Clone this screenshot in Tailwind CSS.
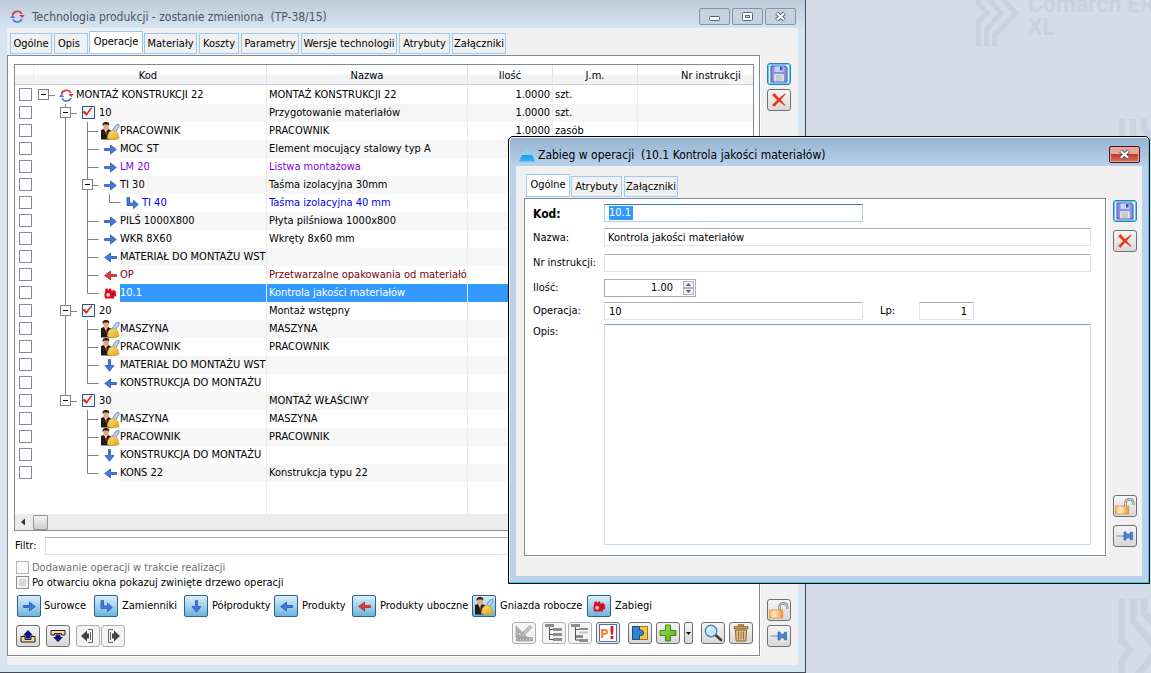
<!DOCTYPE html>
<html lang="pl">
<head>
<meta charset="utf-8">
<title>Technologia produkcji</title>
<script src="https://cdn.jsdelivr.net/npm/@tailwindcss/browser@4"></script>
</head>
<body class="relative h-screen overflow-hidden bg-[#d5dbe7] font-['DejaVu_Sans_Condensed','Noto_Sans',sans-serif] text-[11px] leading-[14px] text-black">

<svg class="absolute h-0 w-0" aria-hidden="true">
  <defs>
    <linearGradient id="gold" x1="0" y1="0" x2="1" y2="1"><stop offset="0" stop-color="#fbe27c"/><stop offset="1" stop-color="#e0a21c"/></linearGradient>
    <linearGradient id="orange" x1="0" y1="0" x2="1" y2="0"><stop offset="0" stop-color="#ffc070"/><stop offset=".4" stop-color="#ffe9c4"/><stop offset="1" stop-color="#f09030"/></linearGradient>
    <linearGradient id="green" x1="0" y1="0" x2="1" y2="1"><stop offset="0" stop-color="#a6e254"/><stop offset="1" stop-color="#4fae12"/></linearGradient>
    <linearGradient id="tri" x1="0" y1="0" x2="0" y2="1"><stop offset="0" stop-color="#a8c4dc"/><stop offset=".5" stop-color="#8fd0f4"/><stop offset=".55" stop-color="#1f9be8"/><stop offset="1" stop-color="#38b4f4"/></linearGradient>
    <symbol id="right" viewBox="0 0 13 11"><path d="M.5 4.500H6.500V1L12.300 5.500L6.500 10V6.500H.5z" fill="#4379dc" stroke="#2b57b4" stroke-width=".8"/></symbol>
    <symbol id="left" viewBox="0 0 13 11"><path d="M12.500 4.500H6.500V1L.7 5.500L6.500 10V6.500H12.500z" fill="#4379dc" stroke="#2b57b4" stroke-width=".8"/></symbol>
    <symbol id="redleft" viewBox="0 0 13 11"><path d="M12.500 4.500H6.500V1L.7 5.500L6.500 10V6.500H12.500z" fill="#dd3c38" stroke="#b02c2c" stroke-width=".8"/></symbol>
    <symbol id="down" viewBox="0 0 11 13"><path d="M4.500 .5V6.500H1L5.500 12.300L10 6.500H6.500V.5z" fill="#4379dc" stroke="#2b57b4" stroke-width=".8"/></symbol>
    <symbol id="ell" viewBox="0 0 13 12"><path d="M1 .5H3.500V6H7.500V3.200L12.300 7.500L7.500 11.500V8.500H1z" fill="#4379dc" stroke="#2b57b4" stroke-width=".8"/></symbol>
    <symbol id="gear" viewBox="0 0 13 11"><path d="M1 4L1.500 .5H3.500L4.500 2L5.500 .5H7L7.500 2.500H9L10 1.500L11 3L12.500 4L11.500 5.500L12.500 7L11.500 8.500L10 8.500V10.500H1L.3 7z" fill="#dc1022"/><circle cx="4.200" cy="6.800" r="1.900" fill="#ffd0d0"/><circle cx="9" cy="6" r="1" fill="#8e0010"/></symbol>
    <symbol id="cycle" viewBox="0 0 15 13"><path d="M2.500 5A5 5 0 0 1 11.800 4" fill="none" stroke="#dc3434" stroke-width="1.700"/><path d="M9.200 5H14.600L12.400 8z" fill="#dc3434"/><path d="M12 9A5 5 0 0 1 3 9.300" fill="none" stroke="#4a78dc" stroke-width="1.700"/><path d="M0 8H5.400L2.600 4.800z" fill="#4a78dc"/></symbol>
    <symbol id="worker" viewBox="0 0 20 18"><path d="M1 8L4 7L5.500 10L8 7L12 9V17.500H1z" fill="#201c1c"/><path d="M4.800 7.500H7.300L6.200 12z" fill="#fff"/><path d="M5.600 8.500H6.600L6.900 12L6 14z" fill="#c22"/><ellipse cx="6" cy="4.500" rx="2.700" ry="3.500" fill="#e7a873"/><path d="M2.800 4C2 1 3.500 0 6 0C8.500 0 10 1 9 4L8.200 2.400L4 2.400z" fill="#3b1d10"/><path d="M11 10L16 3L19 2.200L19 5L14 12z" fill="#b8cff0" stroke="#6688bd" stroke-width=".8"/><path d="M7.500 14.500C8 10 10.500 8 13.500 8.500C17 9 18.500 11.500 18.500 14.500L19.500 16C16 18.500 10 18.500 7 16z" fill="url(#gold)" stroke="#c08a1a" stroke-width=".5"/></symbol>
    <symbol id="floppy" viewBox="0 0 18 18"><path d="M1 1H15.500L17 2.500V17H1z" fill="#8b8fe6" stroke="#4a4cae"/><path d="M4.500 1.500H13.500V7H4.500z" fill="#c4d4f6"/><path d="M10 2H12.500V5.500H10z" fill="#4450a8"/><path d="M4 9H14V16.500H4z" fill="#fafafa" stroke="#8c8ec8" stroke-width=".6"/><path d="M5.500 11H12.500M5.500 13H12.500M5.500 15H12.500" stroke="#999"/></symbol>
    <symbol id="cross" viewBox="0 0 16 16"><path d="M1.200 3.200L3.400 1L8 6.200L14 1.600L14.600 2.300L9.700 7.800L14.300 13L13.700 13.800L8 9.400L3.600 14.800L1 13L6.200 7.900z" fill="#ee3318"/></symbol>
    <symbol id="lock" viewBox="0 0 20 18"><path d="M10.500 9V5.500A4 4 0 0 1 18.300 5.500V8" fill="none" stroke="#8a8a8a" stroke-width="2.600"/><path d="M10.500 9V5.500A4 4 0 0 1 18.300 5.500V8" fill="none" stroke="#dedede" stroke-width="1"/><rect x=".7" y="9" width="13" height="8" fill="url(#orange)" stroke="#dc8c3c" stroke-width=".8"/></symbol>
    <symbol id="pin" viewBox="0 0 18 12"><path d="M.5 6H8" stroke="#999" stroke-width="1.300"/><path d="M8 2H10L10.500 4.200H13.500L14.500 2.200H16.500V9.800H14.500L13.500 7.800H10.500L10 10H8z" fill="#3f86d8" stroke="#1e5aa8" stroke-width=".6"/></symbol>
    <symbol id="tree" viewBox="0 0 18 18"><path d="M0 0H9V3H0zM8 4H17V7H8zM8 9H17V12H8zM8 14H17V17H8z" fill="#8d8d8d"/><path d="M4.500 3V16M4.500 5.500H8M4.500 10.500H8M4.500 15.500H8" fill="none" stroke="#555"/></symbol>
    <symbol id="treecut" viewBox="0 0 18 18"><path d="M0 0H9V3H0zM8 4H17V6H8zM4 11H12V14H4zM8 15H17V18H8z" fill="#8d8d8d"/><path d="M8 7.500H17V9.500H8z" fill="#c6c6c6"/><path d="M4.500 3V16M4.500 5.500H8M4.500 16H8" fill="none" stroke="#555"/></symbol>
  </defs>
</svg>

<!-- Desktop watermark -->
<div class="absolute top-[-7px] left-[1028px] w-[150px] font-['Roboto',sans-serif] text-[23px] leading-[23px] font-bold text-[#cbd1de]">Comarch ERP XL</div>
<svg class="absolute top-0 left-[976px] h-12 w-12" viewBox="0 0 48 48" fill="none" stroke="#cbd1de" stroke-width="5"><path d="M2.500 47V22L11 13L2.500 3V-4M10.500 47V30L25 13L12 -2M18.500 47V36L40 13L26 -2"/></svg>
<svg class="absolute top-[119px] left-[1118px] h-8 w-9" viewBox="0 0 36 32" fill="none" stroke="#cbd1de" stroke-width="6"><path d="M4 0V40M15 0V40M26 0V10L36 22"/></svg>
<svg class="absolute top-[599px] left-[1118px] h-[74px] w-9" viewBox="0 0 36 74" fill="none" stroke="#cbd1de" stroke-width="6.500"><path d="M3.500 0V41L12 51L3.500 62V80M15.500 0V22L36 47M36 56L16 80M26 0V14L38 27"/></svg>

<!-- Main window -->
<main class="flex h-full w-[70%] flex-col border-r border-b border-[#454b54] bg-[#d7e4f2] px-[7px] pb-[7px]">
  <header class="-mx-[7px] flex h-7 shrink-0 items-start bg-linear-to-b from-[#bdcad9] to-[#d6e3f1] pr-[9px] pl-[10px]">
    <svg class="mt-[10px] h-[13px] w-[15px]"><use href="#cycle"/></svg>
    <h1 class="mt-[9px] ml-[7px] grow text-[12px] leading-4 whitespace-pre text-[#4b5561]">Technologia produkcji - zostanie zmieniona  (TP-38/15)</h1>
    <div class="mt-2 flex gap-[2px]">
      <button aria-label="Minimalizuj" class="flex h-[17px] w-[31px] items-center justify-center rounded-[2px] border border-[#8593a8] bg-[#c6d2e0]"><svg class="h-[11px] w-[13px]" viewBox="0 0 13 11"><rect x="1.500" y="5.500" width="10" height="4" rx="1" fill="#fff" stroke="#5a6373"/></svg></button>
      <button aria-label="Maksymalizuj" class="flex h-[17px] w-[31px] items-center justify-center rounded-[2px] border border-[#8593a8] bg-[#c6d2e0]"><svg class="h-[11px] w-[13px]" viewBox="0 0 13 11"><rect x="1.500" y="1.500" width="10" height="8" rx="1" fill="#fff" stroke="#5a6373"/><rect x="4.500" y="4.500" width="4" height="2" fill="#c6d2e0" stroke="#5a6373"/></svg></button>
      <button aria-label="Zamknij" class="flex h-[17px] w-[31px] items-center justify-center rounded-[2px] border border-[#8593a8] bg-[#c6d2e0]"><svg class="h-[11px] w-[13px]" viewBox="0 0 13 11"><path d="M2.500 2L10.500 9M10.500 2L2.500 9" stroke="#5a6373" stroke-width="4"/><path d="M2.800 2.200L10.200 8.800M10.200 2.200L2.800 8.800" stroke="#fff" stroke-width="2"/></svg></button>
    </div>
  </header>

  <div class="flex min-h-0 grow flex-col bg-[#f0f0f0] pb-[9px]">
    <nav class="flex h-[27px] shrink-0 items-end gap-[2px] pb-px pl-[3px]">
      <button class="h-[21px] w-[42px] border border-[#99c9f5] pt-px whitespace-nowrap">Ogólne</button>
      <button class="h-[21px] w-[34px] border border-[#99c9f5] pt-px pr-1 whitespace-nowrap">Opis</button>
      <button class="-mx-px h-[23px] w-[54px] border border-[#99c9f5] bg-white pb-[2px] whitespace-nowrap">Operacje</button>
      <button class="h-[21px] w-[53px] border border-[#99c9f5] pt-px whitespace-nowrap">Materiały</button>
      <button class="h-[21px] w-10 border border-[#99c9f5] pt-px whitespace-nowrap">Koszty</button>
      <button class="h-[21px] w-[58px] border border-[#99c9f5] pt-px whitespace-nowrap">Parametry</button>
      <button class="h-[21px] w-24 border border-[#99c9f5] pt-px whitespace-nowrap">Wersje technologii</button>
      <button class="h-[21px] w-[51px] border border-[#99c9f5] pt-px whitespace-nowrap">Atrybuty</button>
      <button class="h-[21px] w-[54px] border border-[#99c9f5] pt-px whitespace-nowrap">Załączniki</button>
    </nav>

    <div class="flex min-h-0 grow">
      <section class="flex min-w-0 grow flex-col border border-[#828790] bg-white pt-2 pl-[6px] shadow-[1px_1px_0_#fff]">
        <div class="mr-[5px] flex min-h-0 grow flex-col border border-[#828790]">
          <div class="min-h-0 grow overflow-hidden">
            <table class="h-full w-full table-fixed border-separate border-spacing-0">
              <colgroup><col class="w-[19px]"><col class="w-[233px]"><col class="w-[201px]"><col class="w-[85px]"><col class="w-[85px]"><col></colgroup>
              <thead>
                <tr class="h-5 bg-linear-to-b from-white from-45% to-[#f2f3f5] to-55%">
                  <th class="border-r border-b border-r-[#ececec] border-b-[#d5d5d5] p-0"></th>
                  <th class="border-r border-b border-r-[#e2e3e5] border-b-[#d5d5d5] p-0 pt-[2px] pr-1 font-normal">Kod</th>
                  <th class="border-r border-b border-r-[#e2e3e5] border-b-[#d5d5d5] p-0 pt-[2px] font-normal">Nazwa</th>
                  <th class="border-r border-b border-r-[#e2e3e5] border-b-[#d5d5d5] p-0 pt-[2px] font-normal">Ilość</th>
                  <th class="border-r border-b border-r-[#e2e3e5] border-b-[#d5d5d5] p-0 pt-[2px] font-normal">J.m.</th>
                  <th class="border-b border-b-[#d5d5d5] p-0 pt-[2px] pr-3 text-right font-normal">Nr instrukcji</th>
                </tr>
              </thead>
              <tbody id="rows"></tbody>
            </table>
          </div>
          <div class="flex h-4 shrink-0 items-center bg-[#ececec]">
            <svg class="h-4 w-[18px]" viewBox="0 0 18 16"><path d="M10 4.500V11.500L6 8z" fill="#333"/></svg>
            <div class="h-[15px] w-[15px] rounded-[1px] border border-[#979797] bg-linear-to-b from-[#f3f3f3] to-[#cfcfcf]"></div>
          </div>
        </div>

        <div class="mt-[6px] flex h-[18px] shrink-0 items-center pr-[5px]">
          <label for="filtr" class="w-[31px] pl-px">Filtr:</label>
          <input id="filtr" class="h-[18px] min-w-0 grow rounded-[1px] border border-[#e2e3ea] border-t-[#abadb3] px-1">
        </div>
        <div class="mt-[5px] flex h-[15px] shrink-0 items-center gap-[3px] pl-[2px]">
          <input id="dod" type="checkbox" disabled class="h-[13px] w-[13px] appearance-none border border-[#b4b4b4] bg-[#f8f8f8]"><label for="dod" class="text-[#6d6d6d]">Dodawanie operacji w trakcie realizacji</label>
        </div>
        <div class="flex h-[15px] shrink-0 items-center gap-[3px] pl-[2px]">
          <input id="zwin" type="checkbox" class="h-[13px] w-[13px] appearance-none border border-[#8e8f8f] bg-[#d4d8de] shadow-[inset_0_0_0_2px_#f4f4f4]"><label for="zwin">Po otwarciu okna pokazuj zwinięte drzewo operacji</label>
        </div>

        <div class="mt-[5px] grid h-[22px] shrink-0 grid-cols-[77px_90px_90px_78px_120px_115px_1fr] items-center pl-[3px] whitespace-nowrap">
          <div class="flex items-center gap-[3px]"><button id="b1" class="flex h-[22px] w-6 items-center justify-center rounded-[2px] border border-[#2c628b] bg-linear-to-b from-[#d8eefb] to-[#6cb5dd]"><svg class="h-[11px] w-[13px]"><use href="#right"/></svg></button><label for="b1">Surowce</label></div>
          <div class="flex items-center gap-1"><button id="b2" class="flex h-[22px] w-6 items-center justify-center rounded-[2px] border border-[#2c628b] bg-linear-to-b from-[#d8eefb] to-[#6cb5dd]"><svg class="h-3 w-[13px]"><use href="#ell"/></svg></button><label for="b2">Zamienniki</label></div>
          <div class="flex items-center gap-1"><button id="b3" class="flex h-[22px] w-6 items-center justify-center rounded-[2px] border border-[#2c628b] bg-linear-to-b from-[#d8eefb] to-[#6cb5dd]"><svg class="h-[13px] w-[11px]"><use href="#down"/></svg></button><label for="b3">Półprodukty</label></div>
          <div class="flex items-center gap-1"><button id="b4" class="flex h-[22px] w-6 items-center justify-center rounded-[2px] border border-[#2c628b] bg-linear-to-b from-[#d8eefb] to-[#6cb5dd]"><svg class="h-[11px] w-[13px]"><use href="#left"/></svg></button><label for="b4">Produkty</label></div>
          <div class="flex items-center gap-1"><button id="b5" class="flex h-[22px] w-6 items-center justify-center rounded-[2px] border border-[#2c628b] bg-linear-to-b from-[#d8eefb] to-[#6cb5dd]"><svg class="h-[11px] w-[13px]"><use href="#redleft"/></svg></button><label for="b5">Produkty uboczne</label></div>
          <div class="flex items-center gap-1"><button id="b6" class="flex h-[22px] w-6 items-center justify-center rounded-[2px] border border-[#2c628b] bg-linear-to-b from-[#d8eefb] to-[#6cb5dd]"><svg class="h-[18px] w-5"><use href="#worker"/></svg></button><label for="b6">Gniazda robocze</label></div>
          <div class="flex items-center gap-1"><button id="b7" class="flex h-[22px] w-6 items-center justify-center rounded-[2px] border border-[#2c628b] bg-linear-to-b from-[#d8eefb] to-[#6cb5dd]"><svg class="h-[11px] w-[13px]"><use href="#gear"/></svg></button><label for="b7">Zabiegi</label></div>
        </div>

        <div class="mt-[5px] mb-2 flex h-[25px] shrink-0 pr-[6px] pl-[2px]">
          <div class="flex grow items-end gap-[6px]">
            <button aria-label="Zwiń" class="flex h-[22px] w-6 items-center justify-center rounded-[3px] border border-[#707070] bg-linear-to-b from-[#f5f5f5] to-[#d8d8d8]"><svg class="h-4 w-[18px]" viewBox="0 0 18 16"><path d="M2 8.500H6V11.500H12V8.500H16V14H2z" fill="#ffe264" stroke="#1a1650"/><path d="M9 2L14 7.500H11.500V10.500H6.500V7.500H4z" fill="#14107a"/></svg></button>
            <button aria-label="Rozwiń" class="flex h-[22px] w-6 items-center justify-center rounded-[3px] border border-[#707070] bg-linear-to-b from-[#f5f5f5] to-[#d8d8d8]"><svg class="h-4 w-[18px]" viewBox="0 0 18 16"><path d="M2 2.500H16V7H12.500V5.500H5.500V7H2z" fill="#ffe264" stroke="#1a1650"/><path d="M6.500 6.500H11.500V9H14L9 14L4 9H6.500z" fill="#14107a"/></svg></button>
            <div class="flex gap-px">
              <button aria-label="Poprzedni" class="flex h-[22px] w-6 items-center justify-center rounded-[3px] border border-[#b0b0b0] bg-[#f4f4f4]"><svg class="h-4 w-[18px]" viewBox="0 0 18 16"><path d="M2 8L8 2.500V5.500H10V10.500H8V13.500z" fill="#444"/><path d="M9 1.500H13.500V14.500H9M11.500 4V12" fill="none" stroke="#666"/></svg></button>
              <button aria-label="Następny" class="flex h-[22px] w-6 items-center justify-center rounded-[3px] border border-[#b0b0b0] bg-[#f4f4f4]"><svg class="h-4 w-[18px]" viewBox="0 0 18 16"><path d="M16 8L10 2.500V5.500H8V10.500H10V13.500z" fill="#444"/><path d="M9 1.500H4.500V14.500H9M6.500 4V12" fill="none" stroke="#666"/></svg></button>
            </div>
          </div>
          <div class="flex items-start">
            <button aria-label="Projekt" class="mr-[6px] flex h-[22px] w-6 items-center justify-center rounded-[3px] border border-[#b0b0b0] bg-[#f4f4f4]"><svg class="h-[18px] w-5" viewBox="0 0 20 18"><path d="M2 2V13H13zM4.500 7.500L8 11H4.500z" fill="#b8b8b8" fill-rule="evenodd" stroke="#888" stroke-width=".6"/><path d="M8 9L16 1.500L18 3.500L10.500 11z" fill="#c4c4c4" stroke="#888" stroke-width=".6"/><path d="M2.500 13.500H18.500V17H2.500z" fill="#bcbcbc" stroke="#888" stroke-width=".6"/><path d="M5 14V15.500M8 14V15.500M11 14V15.500M14 14V15.500" stroke="#777"/></svg></button>
            <button aria-label="Rozwiń drzewo" class="mr-[2px] flex h-[22px] w-6 items-center justify-center rounded-[3px] border border-[#b0b0b0] bg-[#f4f4f4]"><svg class="h-[18px] w-[18px]"><use href="#tree"/></svg></button>
            <button aria-label="Zwiń drzewo" class="mr-1 flex h-[22px] w-6 items-center justify-center rounded-[3px] border border-[#b0b0b0] bg-[#f4f4f4]"><svg class="h-[18px] w-[18px]"><use href="#treecut"/></svg></button>
            <button aria-label="Priorytet" class="mr-2 flex h-[22px] w-6 items-center justify-center rounded-[3px] border border-[#707070] bg-[#ececec]"><span class="flex h-[18px] w-[18px] items-center justify-center border border-[#4a72b4] bg-white text-[13px] leading-none font-bold text-[#ee8430]">P<span class="text-[17px] leading-none text-[#dc1414]">!</span></span></button>
            <button aria-label="Dodatki" class="mr-1 flex h-[22px] w-6 items-center justify-center rounded-[3px] border border-[#707070] bg-linear-to-b from-[#f5f5f5] to-[#d8d8d8]"><svg class="h-4 w-[18px]" viewBox="0 0 18 16"><rect x="1.500" y="1.500" width="15" height="13" fill="#f6c63c" stroke="#a87818"/><path d="M1.500 1.500H8.500V5.500C10 4 12.500 5.500 12.500 8C12.500 10.500 10 11.500 8.500 10V14.500H1.500z" fill="#2f86cc" stroke="#174e86"/></svg></button>
            <button aria-label="Dodaj" class="mr-1 flex h-[22px] w-6 items-center justify-center rounded-[3px] border border-[#707070] bg-linear-to-b from-[#f5f5f5] to-[#d8d8d8]"><svg class="h-[18px] w-[18px]" viewBox="0 0 18 18"><path d="M6.500 1H11.500V6.500H17V11.500H11.500V17H6.500V11.500H1V6.500H6.500z" fill="url(#green)" stroke="#3a8a12"/></svg></button>
            <button aria-label="Więcej" class="mr-2 flex h-[22px] w-[9px] items-center justify-center rounded-[2px] border border-[#707070] bg-linear-to-b from-[#f5f5f5] to-[#d8d8d8]"><svg class="h-[3px] w-[5px]" viewBox="0 0 5 3"><path d="M0 0H5L2.500 3z"/></svg></button>
            <button aria-label="Podgląd" class="mr-1 flex h-[22px] w-6 items-center justify-center rounded-[3px] border border-[#707070] bg-linear-to-b from-[#f5f5f5] to-[#d8d8d8]"><svg class="h-[18px] w-5" viewBox="0 0 20 18"><path d="M12 10.500L18 16" stroke="#444" stroke-width="2.800" stroke-linecap="round"/><circle cx="8" cy="7" r="5.700" fill="#c8e6fb" stroke="#4c80bc" stroke-width="1.400"/><path d="M4.800 6.500A3.500 3.500 0 0 1 8 3.500" fill="none" stroke="#fff" stroke-width="1.300"/></svg></button>
            <button aria-label="Usuń" class="flex h-[22px] w-6 items-center justify-center rounded-[3px] border border-[#707070] bg-linear-to-b from-[#f5f5f5] to-[#d8d8d8]"><svg class="h-[18px] w-4" viewBox="0 0 16 18"><path d="M5.500 2.500V1H10.500V2.500" fill="none" stroke="#9a6a28" stroke-width="1.300"/><path d="M1 2.500H15V5H1z" fill="#c8985a" stroke="#8a5c20" stroke-width=".7"/><path d="M2.500 6H13.500L12.800 17H3.200z" fill="#e4c294" stroke="#8a5c20"/><path d="M5.500 7.500V15.500M8 7.500V15.500M10.500 7.500V15.500" stroke="#9a6c30"/></svg></button>
          </div>
        </div>
      </section>

      <aside class="flex w-[38px] shrink-0 flex-col items-start gap-1 pt-2 pb-[9px] pl-[7px]">
        <button aria-label="Zapisz" class="flex h-[22px] w-6 items-center justify-center rounded-[3px] border border-[#2f7fae] bg-[#e4f4fc] shadow-[inset_0_0_0_1px_#4fd0f4]"><svg class="h-[18px] w-[18px]"><use href="#floppy"/></svg></button>
        <button aria-label="Anuluj" class="flex h-[22px] w-6 items-center justify-center rounded-[3px] border border-[#707070] bg-linear-to-b from-[#f5f5f5] to-[#d8d8d8]"><svg class="h-4 w-4"><use href="#cross"/></svg></button>
        <div class="grow"></div>
        <button aria-label="Blokada" class="flex h-[22px] w-6 items-center justify-center rounded-[3px] border border-[#707070] bg-linear-to-b from-[#f5f5f5] to-[#d8d8d8]"><svg class="h-[18px] w-5"><use href="#lock"/></svg></button>
        <button aria-label="Przypnij" class="flex h-[22px] w-6 items-center justify-center rounded-[3px] border border-[#707070] bg-linear-to-b from-[#f5f5f5] to-[#d8d8d8]"><svg class="h-3 w-[18px]"><use href="#pin"/></svg></button>
      </aside>
    </div>
  </div>
</main>

<!-- Dialog window -->
<div role="dialog" aria-labelledby="dlgtitle" class="absolute top-[136px] right-px left-[508px] flex h-[448px] flex-col rounded-t-[5px] border border-black bg-[#b9d1ea] px-[7px] pb-[7px] shadow-[inset_-1px_-1px_0_#2fd0e8,inset_1px_1px_0_#eaf2fa]">
  <header class="flex h-[29px] shrink-0 items-start justify-between">
    <div class="-mx-[6px] mt-px flex h-7 grow items-start rounded-t-[4px] bg-linear-to-b from-[#97b4d2] to-[#b9d1ea] pl-[9px]">
      <svg class="mt-[9px] h-[15px] w-4" viewBox="0 0 16 15"><path d="M6.500 1.500Q8 -.5 9.500 1.500L15.800 13.500Q16 14.500 14.500 14.500H1.500Q0 14.500 .2 13.500z" fill="url(#tri)"/></svg>
      <h2 id="dlgtitle" class="mt-[9px] ml-[3px] grow text-[12px] leading-4 whitespace-pre">Zabieg w operacji  (10.1 Kontrola jakości materiałów)</h2>
      <button aria-label="Zamknij okno" class="mt-2 mr-2 flex h-[17px] w-[31px] items-center justify-center rounded-[2px] border border-[#4a1520] bg-linear-to-b from-[#e8a79c] from-45% via-[#bd3c28] via-50% to-[#d9715c] shadow-[inset_0_0_0_1px_#e9a99c]"><svg class="h-[11px] w-[13px]" viewBox="0 0 13 11"><path d="M2.500 2L10.500 9M10.500 2L2.500 9" stroke="#565c6c" stroke-width="4"/><path d="M2.800 2.200L10.200 8.800M10.200 2.200L2.800 8.800" stroke="#fff" stroke-width="2"/></svg></button>
    </div>
  </header>
  <div class="flex min-h-0 grow flex-col bg-[#f0f0f0] pb-5 pl-2">
    <nav class="flex h-8 shrink-0 items-end gap-px pb-px pl-[2px]">
      <button class="h-[23px] w-11 border border-[#99c9f5] bg-white pb-[2px] whitespace-nowrap">Ogólne</button>
      <button class="h-[21px] w-[51px] border border-[#99c9f5] pt-px whitespace-nowrap">Atrybuty</button>
      <button class="ml-px h-[21px] w-[54px] border border-[#99c9f5] pt-px whitespace-nowrap">Załączniki</button>
    </nav>
    <div class="flex min-h-0 grow">
      <form class="flex min-w-0 grow flex-col border border-[#828790] bg-white pt-[5px] pr-[14px] pb-[10px] pl-2 shadow-[2px_1px_0_#fff]">
        <div class="flex h-[18px] shrink-0 items-center"><label for="kod" class="w-[71px] shrink-0 pt-px text-[12px] font-bold">Kod:</label>
          <div class="flex h-[18px] w-[259px] items-center rounded-[1px] border border-[#b5cfe7] border-t-[#3d7bad] pl-1"><input id="kod" value="10.1" class="h-[14px] w-6 bg-[#3399ff] text-white"></div></div>
        <div class="mt-[6px] flex h-[18px] shrink-0 items-center"><label for="nazwa" class="w-[71px] shrink-0 pt-px">Nazwa:</label><input id="nazwa" value="Kontrola jakości materiałów" class="h-[18px] min-w-0 grow rounded-[1px] border border-[#e2e3ea] border-t-[#abadb3] px-[3px]"></div>
        <div class="mt-2 flex h-[18px] shrink-0 items-center"><label for="nr" class="w-[71px] shrink-0 whitespace-nowrap">Nr instrukcji:</label><input id="nr" class="h-[18px] min-w-0 grow rounded-[1px] border border-[#e2e3ea] border-t-[#abadb3] px-[3px]"></div>
        <div class="mt-[7px] flex h-[18px] shrink-0 items-center"><label for="ilosc" class="w-[71px] shrink-0">Ilość:</label>
          <div class="flex h-[18px] w-[92px] items-center border border-[#abadb3]"><input id="ilosc" value="1.00" class="min-w-0 grow pr-[10px] text-right"><div class="mr-px flex h-[14px] w-[11px] shrink-0 flex-col"><button type="button" aria-label="Więcej sztuk" class="flex grow items-center justify-center border border-[#b4b4b4] bg-[#ededed]"><svg class="h-[3px] w-[5px]" viewBox="0 0 5 3"><path d="M2.500 0L5 3H0z" fill="#3e5a9c"/></svg></button><button type="button" aria-label="Mniej sztuk" class="flex grow items-center justify-center border border-[#b4b4b4] bg-[#ededed]"><svg class="h-[3px] w-[5px]" viewBox="0 0 5 3"><path d="M0 0H5L2.500 3z" fill="#3e5a9c"/></svg></button></div></div></div>
        <div class="mt-[5px] flex h-[18px] shrink-0 items-center"><label for="oper" class="w-[71px] shrink-0">Operacja:</label><input id="oper" value="10" class="h-[18px] w-[259px] rounded-[1px] border border-[#e2e3ea] border-t-[#abadb3] px-1"><label for="lp" class="ml-[17px] w-[39px]">Lp:</label><input id="lp" value="1" class="h-[18px] w-[55px] rounded-[1px] border border-[#e2e3ea] border-t-[#abadb3] px-[6px] text-right"></div>
        <div class="mt-1 flex min-h-0 grow"><label for="opis" class="w-[71px] shrink-0 pt-px">Opis:</label><textarea id="opis" class="min-w-0 grow resize-none rounded-[1px] border border-[#c5daed] border-t-[#7da2c0]"></textarea></div>
      </form>
      <aside class="flex w-9 shrink-0 flex-col items-start gap-2 pt-[2px] pb-[9px] pl-[7px]">
        <button aria-label="Zapisz zabieg" class="flex h-[22px] w-6 items-center justify-center rounded-[3px] border border-[#2f7fae] bg-[#e4f4fc] shadow-[inset_0_0_0_1px_#4fd0f4]"><svg class="h-[18px] w-[18px]"><use href="#floppy"/></svg></button>
        <button aria-label="Anuluj zabieg" class="flex h-[22px] w-6 items-center justify-center rounded-[3px] border border-[#707070] bg-linear-to-b from-[#f5f5f5] to-[#d8d8d8]"><svg class="h-4 w-4"><use href="#cross"/></svg></button>
        <div class="grow"></div>
        <button aria-label="Blokada zabiegu" class="flex h-[22px] w-6 items-center justify-center rounded-[3px] border border-[#707070] bg-linear-to-b from-[#f5f5f5] to-[#d8d8d8]"><svg class="h-[18px] w-5"><use href="#lock"/></svg></button>
        <button aria-label="Przypnij zabieg" class="flex h-[22px] w-6 items-center justify-center rounded-[3px] border border-[#707070] bg-linear-to-b from-[#f5f5f5] to-[#d8d8d8]"><svg class="h-3 w-[18px]"><use href="#pin"/></svg></button>
      </aside>
    </div>
  </div>
</div>

<script>
// level, icon, code, name, quantity, unit, text colour, flags: b = expander, e = last child, n = no operations below, s = selected
const P = 'text-[#8000e0]', B = 'text-[#0000ee]', M = 'text-[#7a0010]', K = 'text-black';
const data = [
  [0,'cycle','MONTAŻ KONSTRUKCJI 22','MONTAŻ KONSTRUKCJI 22','1.0000','szt.',K,'b'],
  [1,'check','10','Przygotowanie materiałów','1.0000','szt.',K,'b'],
  [2,'worker','PRACOWNIK','PRACOWNIK','1.0000','zasób',K,''],
  [2,'right','MOC ST','Element mocujący stalowy typ A','','',K,''],
  [2,'right','LM 20','Listwa montażowa','','',P,''],
  [2,'right','TI 30','Taśma izolacyjna 30mm','','',K,'b'],
  [3,'ell','TI 40','Taśma izolacyjna 40 mm','','',B,''],
  [2,'right','PILŚ 1000X800','Płyta pilśniowa 1000x800','','',K,''],
  [2,'right','WKR 8X60','Wkręty 8x60 mm','','',K,''],
  [2,'left','MATERIAŁ DO MONTAŻU WST','','','',K,''],
  [2,'redleft','OP','Przetwarzalne opakowania od materiałów','','',M,''],
  [2,'gear','10.1','Kontrola jakości materiałów','','',K,'es'],
  [1,'check','20','Montaż wstępny','','',K,'b'],
  [2,'worker','MASZYNA','MASZYNA','','',K,''],
  [2,'worker','PRACOWNIK','PRACOWNIK','','',K,''],
  [2,'down','MATERIAŁ DO MONTAŻU WST','','','',K,''],
  [2,'left','KONSTRUKCJA DO MONTAŻU','','','',K,'e'],
  [1,'check','30','MONTAŻ WŁAŚCIWY','','',K,'be'],
  [2,'worker','MASZYNA','MASZYNA','','',K,'n'],
  [2,'worker','PRACOWNIK','PRACOWNIK','','',K,'n'],
  [2,'down','KONSTRUKCJA DO MONTAŻU','','','',K,'n'],
  [2,'left','KONS 22','Konstrukcja typu 22','','',K,'ne'],
];
const widths = [42, 65, 86, 108];
const sizes = {cycle:[25,3,15,13], worker:[66,0,20,18], right:[70,4,13,11], left:[70,4,13,11], redleft:[70,4,13,11], down:[70,3,11,13], ell:[92,3,13,12], gear:[70,4,13,11]};
function tree(lv, icon, o) {
  const has = c => o.includes(c), w = widths[lv];
  let d = '';
  if (lv === 0) d += 'M15 9.500h6';
  if (lv >= 1 && !has('n')) d += lv === 1 && has('e') ? 'M31.500 0v9' : 'M31.500 0v18';
  if (lv === 1) d += 'M37 9.500h6';
  if (lv === 2) d += (has('e') ? 'M53.500 0v9.500' : 'M53.500 0v18') + 'M53.500 9.500h11';
  if (lv === 3) d += 'M53.500 0v18M75.500 0v8.500h11';
  let s = '<path d="' + d + '" fill="none" stroke="#808080"/>';
  if (has('b')) {
    const x = [4.5, 26.5, 48.5][lv];
    s += '<rect x="' + x + '" y="3.500" width="10" height="10" fill="#fff" stroke="#808080"/><path d="M' + (x + 2.5) + ' 8.500h5" stroke="#000"/>';
  }
  if (icon === 'check') s += '<rect x="48.500" y="2.500" width="12" height="12" fill="#f2f8fc" stroke="#2a5a8c"/><path d="M49 8l1.500-1 1.800 2.500 5.200-6 .6.600-5.700 7.500z" fill="#e01818" stroke="#e01818" stroke-width=".6"/>';
  else { const z = sizes[icon]; s += '<use href="#' + icon + '" x="' + z[0] + '" y="' + z[1] + '" width="' + z[2] + '" height="' + z[3] + '"/>'; }
  return '<svg class="shrink-0" width="' + w + '" height="18">' + s + '</svg>';
}
document.getElementById('rows').innerHTML = '<tr class="h-px"><td class="p-0"></td><td class="border-r border-[#ececec] p-0"></td><td class="border-r border-[#ececec] p-0"></td><td class="border-r border-[#ececec] p-0"></td><td class="border-r border-[#ececec] p-0"></td><td class="p-0"></td></tr>' +
data.map(([lv, icon, code, name, qty, unit, colour, flags], i) => {
  const sel = flags.includes('s');
  const bg = sel ? 'bg-[#3399ff]' : i % 2 ? 'bg-[#f6f6f6]' : 'bg-white';
  const tc = sel ? 'text-white' : colour;
  return '<tr class="h-[18px]"><td class="p-0 align-top"><input type="checkbox" aria-label="Zaznacz ' + code + '" class="mt-[2px] ml-1 block h-[13px] w-[13px] appearance-none border border-[#8484ac] bg-white"></td>' +
    '<td class="border-r border-[#ececec] p-0"><div class="flex h-[18px] overflow-hidden whitespace-nowrap">' + tree(lv, icon, flags) + '<span class="grow leading-[18px] ' + bg + ' ' + tc + '">' + code + '</span></div></td>' +
    '<td class="overflow-hidden border-r border-[#ececec] p-0 pl-[2px] whitespace-nowrap ' + bg + ' ' + tc + '">' + name + '</td>' +
    '<td class="border-r border-[#ececec] p-0 pr-[2px] text-right ' + bg + ' ' + tc + '">' + qty + '</td>' +
    '<td class="border-r border-[#ececec] p-0 pl-[2px] ' + bg + ' ' + tc + '">' + unit + '</td><td class="p-0 ' + bg + '"></td></tr>';
}).join('') +
'<tr><td class="p-0"></td><td class="border-r border-[#ececec] p-0"></td><td class="border-r border-[#ececec] p-0"></td><td class="border-r border-[#ececec] p-0"></td><td class="border-r border-[#ececec] p-0"></td><td class="p-0"></td></tr>';
</script>
</body>
</html>
